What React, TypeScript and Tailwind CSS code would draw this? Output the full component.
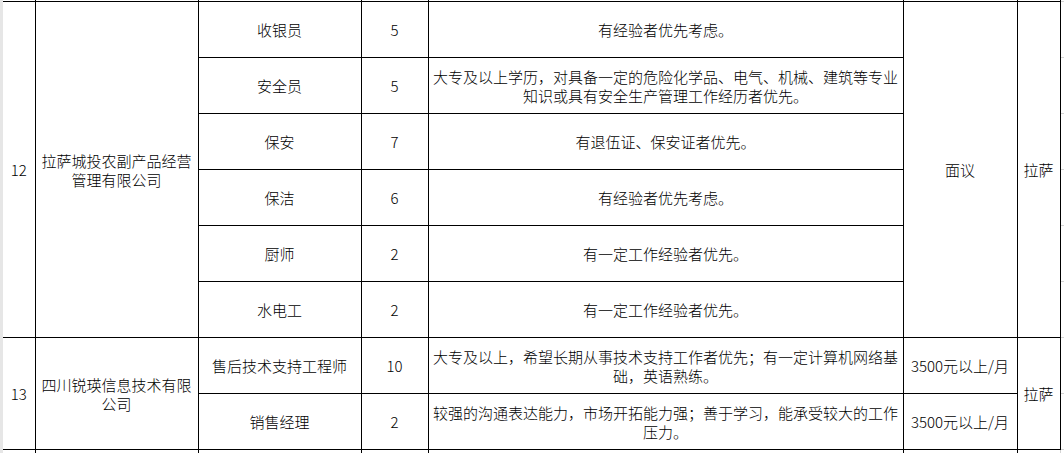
const cell = 'border border-black p-0 text-center align-middle whitespace-nowrap';
const grid = 'border border-[#d4d4d4] p-0';

type Job = { title: string; count: string; req: string[]; salary?: string };

const jobs12: Job[] = [
  { title: '收银员', count: '5', req: ['有经验者优先考虑。'] },
  {
    title: '安全员',
    count: '5',
    req: ['大专及以上学历，对具备一定的危险化学品、电气、机械、建筑等专业', '知识或具有安全生产管理工作经历者优先。'],
  },
  { title: '保安', count: '7', req: ['有退伍证、保安证者优先。'] },
  { title: '保洁', count: '6', req: ['有经验者优先考虑。'] },
  { title: '厨师', count: '2', req: ['有一定工作经验者优先。'] },
  { title: '水电工', count: '2', req: ['有一定工作经验者优先。'] },
];

const jobs13: Job[] = [
  {
    title: '售后技术支持工程师',
    count: '10',
    req: ['大专及以上，希望长期从事技术支持工作者优先；有一定计算机网络基', '础，英语熟练。'],
    salary: '3500元以上/月',
  },
  {
    title: '销售经理',
    count: '2',
    req: ['较强的沟通表达能力，市场开拓能力强；善于学习，能承受较大的工作', '压力。'],
    salary: '3500元以上/月',
  },
];

const Lines = ({ lines }: { lines: string[] }) => (
  <>
    {lines.map((l, i) => (
      <div key={i}>{l}</div>
    ))}
  </>
);

const App = () => {
  return (
    <div
      className="flex h-[453px] w-[1064px] overflow-hidden bg-white text-black text-[15px] leading-[19px] font-light"
      style={{ fontFamily: '"Noto Sans CJK SC", "Liberation Sans", sans-serif' }}
    >
      <div className="w-[3px] shrink-0 bg-[#e6e6e6]" />
      <div className="flex-1 overflow-hidden">
        <table className="-mt-[19px] border-collapse table-fixed w-[1061px]">
          <colgroup>
            <col className="w-[32px]" />
            <col className="w-[163px]" />
            <col className="w-[163px]" />
            <col className="w-[67px]" />
            <col className="w-[475px]" />
            <col className="w-[114px]" />
            <col className="w-[43px]" />
            <col className="w-[4px]" />
          </colgroup>
          <tbody>
            <tr className="h-[20px]">
              <td className={`${cell} border-l-0`} />
              <td className={cell} />
              <td className={cell} />
              <td className={cell} />
              <td className={cell} />
              <td className={cell} />
              <td className={cell} />
              <td className={grid} />
            </tr>
            {jobs12.map((job, i) => (
              <tr key={job.title} className="h-[56px]">
                {i === 0 && (
                  <>
                    <td rowSpan={6} className={`${cell} border-l-0`}>
                      12
                    </td>
                    <td rowSpan={6} className={cell}>
                      拉萨城投农副产品经营
                      <br />
                      管理有限公司
                    </td>
                  </>
                )}
                <td className={cell}>{job.title}</td>
                <td className={cell}>{job.count}</td>
                <td className={cell}>
                  <Lines lines={job.req} />
                </td>
                {i === 0 && (
                  <>
                    <td rowSpan={6} className={cell}>
                      面议
                    </td>
                    <td rowSpan={6} className={cell}>
                      拉萨
                    </td>
                  </>
                )}
                <td className={grid} />
              </tr>
            ))}
            {jobs13.map((job, i) => (
              <tr key={job.title} className="h-[56px]">
                {i === 0 && (
                  <>
                    <td rowSpan={2} className={`${cell} border-l-0`}>
                      13
                    </td>
                    <td rowSpan={2} className={cell}>
                      四川锐瑛信息技术有限
                      <br />
                      公司
                    </td>
                  </>
                )}
                <td className={cell}>{job.title}</td>
                <td className={cell}>{job.count}</td>
                <td className={cell}>
                  <Lines lines={job.req} />
                </td>
                <td className={cell}>{job.salary}</td>
                {i === 0 && (
                  <td rowSpan={2} className={cell}>
                    拉萨
                  </td>
                )}
                <td className={grid} />
              </tr>
            ))}
            <tr className="h-[20px]">
              <td className={`${cell} border-l-0`} />
              <td className={cell} />
              <td className={cell} />
              <td className={cell} />
              <td className={cell} />
              <td className={cell} />
              <td className={`${cell} border-r-0`} />
              <td className={grid} />
            </tr>
          </tbody>
        </table>
      </div>
    </div>
  );
};

export default App;
